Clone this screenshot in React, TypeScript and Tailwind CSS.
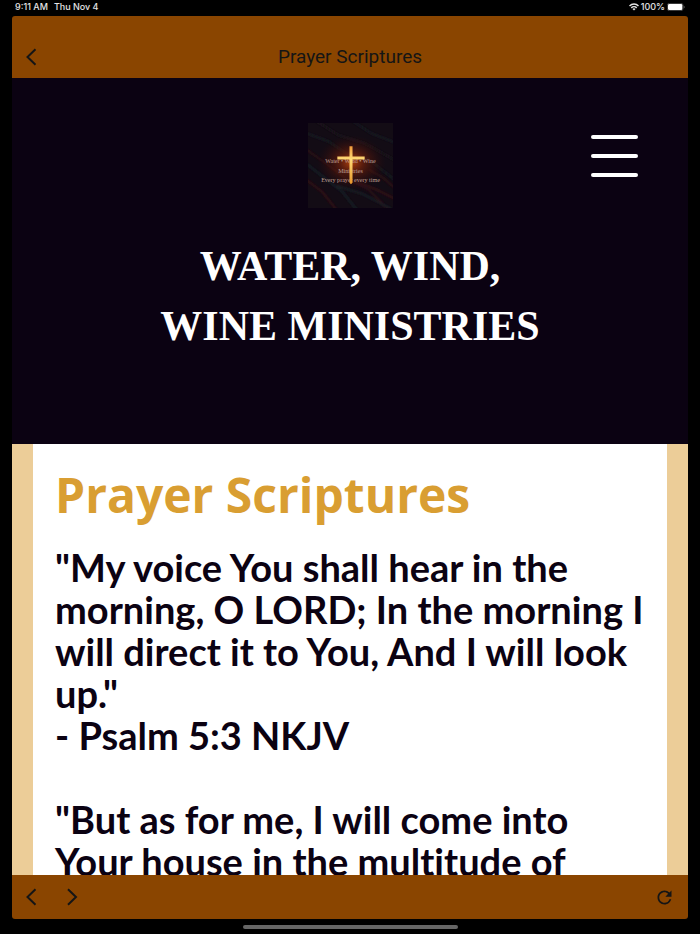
import { useState, type ReactNode } from 'react'
import { MdRefresh } from 'react-icons/md'

const VERSES = [
  {
    lines: [
      '"My voice You shall hear in the',
      'morning, O LORD; In the morning I',
      'will direct it to You, And I will look',
      'up."',
    ],
    source: '- Psalm 5:3 NKJV',
  },
  {
    lines: ['"But as for me, I will come into', 'Your house in the multitude of'],
  },
]

function StatusBar() {
  return (
    <div className="flex h-4 shrink-0 items-center justify-between px-[15px] pb-[2px] text-[9px] leading-3 font-medium text-white/90">
      <div className="flex gap-[6px]">
        <span>9:11 AM</span>
        <span>Thu Nov 4</span>
      </div>
      <div className="flex items-center gap-[2px]">
        <svg viewBox="0 0 20 15" className="h-[8px] w-[10px]" aria-hidden="true">
          <g fill="none" stroke="currentColor" strokeWidth="3">
            <path d="M1 5.400C6 .4 14 .4 19 5.400" />
            <path d="M4.600 9.200c3-2.900 7.800-2.900 10.800 0" />
          </g>
          <path d="M10 14.500 6.900 11.400c1.700-1.600 4.500-1.600 6.200 0z" fill="currentColor" />
        </svg>
        <span>100%</span>
        <svg viewBox="0 0 54 24" className="h-[8px] w-[18px]" aria-hidden="true">
          <rect x="1" y="1" width="47" height="22" rx="6" fill="none" stroke="#666" strokeWidth="2" />
          <rect x="3" y="3" width="43" height="18" rx="4" fill="#fff" />
          <path d="M50.500 8c3 1 3 7 0 8z" fill="#777" />
        </svg>
      </div>
    </div>
  )
}

function BarButton({ label, children }: { label: string; children: ReactNode }) {
  return (
    <button
      type="button"
      aria-label={label}
      className="flex h-10 w-10 shrink-0 items-center justify-center text-[#151515]"
    >
      {children}
    </button>
  )
}

function Chevron({ direction }: { direction: 'left' | 'right' }) {
  return (
    <svg viewBox="0 0 12 18" className="h-[18px] w-3" aria-hidden="true">
      <path
        d={direction === 'left' ? 'M9.500 1.200 1.500 9l8 7.800' : 'M2 1.200 10 9l-8 7.800'}
        fill="none"
        stroke="currentColor"
        strokeWidth="2"
      />
    </svg>
  )
}

function MinistryLogo() {
  return (
    <svg
      viewBox="0 0 84 84"
      className="h-[85px] w-[85px]"
      role="img"
      aria-label="Water, Wind, Wine Ministries"
    >
      <defs>
        <radialGradient id="glow">
          <stop offset="0" stopColor="#b8420c" stopOpacity="0.95" />
          <stop offset="0.35" stopColor="#6c200c" stopOpacity="0.75" />
          <stop offset="1" stopColor="#300a0a" stopOpacity="0" />
        </radialGradient>
        <linearGradient id="cross" x1="0" y1="0" x2="0" y2="1">
          <stop offset="0" stopColor="#f09a3a" />
          <stop offset="0.35" stopColor="#ffdc78" />
          <stop offset="1" stopColor="#e8952a" />
        </linearGradient>
        <filter id="soft">
          <feGaussianBlur stdDeviation="1.2" />
        </filter>
        <clipPath id="frame">
          <rect width="84" height="84" />
        </clipPath>
      </defs>
      <g clipPath="url(#frame)">
        <rect width="84" height="84" fill="#130c15" />
        <g fill="none" strokeWidth="2" filter="url(#soft)">
          <path d="M-2 10 20 18 38 30 60 36 88 58" stroke="#181c22" />
          <path d="M8-2 30 12 56 20 88 38" stroke="#1c171d" />
          <path d="M44-2 62 10 88 20" stroke="#171c22" />
          <path d="M-2 26 18 40 36 54 60 66 82 88" stroke="#2c1016" />
          <path d="M-2 40 16 54 34 68 50 88" stroke="#182128" />
          <path d="M-2 56 14 68 30 88" stroke="#341118" />
          <path d="M28 62 54 70 88 88" stroke="#1a2026" />
          <path d="M48 58 68 66 88 76" stroke="#361217" />
          <path d="M60 46 74 54 88 66" stroke="#2d1118" />
        </g>
        <ellipse cx="43" cy="39" rx="34" ry="27" fill="url(#glow)" />
        <g fill="#c0a097" fontFamily="'Liberation Serif', serif" fontSize="6" textAnchor="middle">
          <text x="42" y="40">Water • Wind • Wine</text>
          <text x="42" y="49">Ministries</text>
          <text x="42" y="58">Every prayer every time</text>
        </g>
        <path d="M41 23h3v10h12v3H44v23l-1.500 1.500L41 59V36H29V33h12z" fill="url(#cross)" />
      </g>
    </svg>
  )
}

function SiteHeader() {
  const [menuOpen, setMenuOpen] = useState(false)

  return (
    <header className="h-[366px] shrink-0 bg-[#0b0212] pt-[45px]">
      <div className="grid grid-cols-[1fr_auto_1fr] items-start px-[50px]">
        <span />
        <MinistryLogo />
        <button
          type="button"
          aria-label="Menu"
          aria-expanded={menuOpen}
          onClick={() => setMenuOpen(!menuOpen)}
          className="mt-3 flex flex-col gap-[15px] justify-self-end"
        >
          <span className="h-1 w-[47px] rounded-full bg-white" />
          <span className="h-1 w-[47px] rounded-full bg-white" />
          <span className="h-1 w-[47px] rounded-full bg-white" />
        </button>
      </div>
      <h1 className="mt-7 text-center font-['Liberation_Serif',serif] text-[42px] leading-[60px] font-bold text-white">
        WATER, WIND,
        <br />
        WINE MINISTRIES
      </h1>
    </header>
  )
}

function Scriptures() {
  return (
    <main className="mx-[21px] min-h-full bg-white px-[22px] pt-5">
      <h2 className="font-['Open_Sans',sans-serif] text-[48px] leading-[62px] font-bold whitespace-nowrap text-[#d99e32]">
        Prayer Scriptures
      </h2>
      <div className="mt-5 space-y-[42px] font-['Lato',sans-serif] text-[38px] leading-[42px] font-bold whitespace-nowrap text-[#0b0212] [font-variant-ligatures:none]">
        {VERSES.map((verse) => (
          <p key={verse.lines[0]}>
            {verse.lines.map((line) => (
              <span key={line} className="block">
                {line}
              </span>
            ))}
            {verse.source && <span className="block">{verse.source}</span>}
          </p>
        ))}
      </div>
    </main>
  )
}

export default function App() {
  return (
    <div className="flex h-screen flex-col bg-black font-['Inter',sans-serif]">
      <StatusBar />
      <div className="mx-3 flex min-h-0 flex-1 flex-col overflow-hidden rounded-[3px] bg-[#8a4500]">
        <div className="grid h-[62px] shrink-0 grid-cols-[40px_1fr_40px] items-end pb-px">
          <BarButton label="Back">
            <Chevron direction="left" />
          </BarButton>
          <p className="text-center font-['Roboto',sans-serif] text-[19px] leading-10 text-[#151515]">
            Prayer Scriptures
          </p>
        </div>
        <div className="flex min-h-0 flex-1 flex-col overflow-hidden bg-[#eccd98]">
          <SiteHeader />
          <Scriptures />
        </div>
        <nav className="flex h-11 shrink-0 items-center" aria-label="Browser">
          <BarButton label="Previous page">
            <Chevron direction="left" />
          </BarButton>
          <BarButton label="Next page">
            <Chevron direction="right" />
          </BarButton>
          <div className="ml-auto pr-1">
            <BarButton label="Reload">
              <MdRefresh size={21} />
            </BarButton>
          </div>
        </nav>
      </div>
      <div className="flex h-[15px] shrink-0 items-center justify-center">
        <div className="h-1 w-[215px] rounded-full bg-[#666]" />
      </div>
    </div>
  )
}
